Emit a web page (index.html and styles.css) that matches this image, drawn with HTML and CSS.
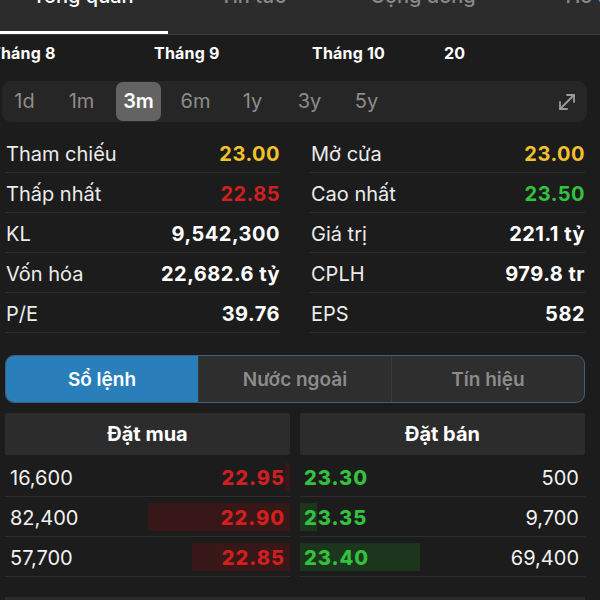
FILE: index.html
```html
<!DOCTYPE html>
<html lang="vi">
<head>
    <meta charset="UTF-8">
    <meta name="viewport" content="width=device-width, initial-scale=1.0">
    <title>Tổng quan</title>
    <link rel="stylesheet" href="styles.css">
</head>
<body>
    <nav class="tabs">
        <div class="tab active">Tổng quan</div>
        <div class="tab">Tin tức</div>
        <div class="tab">Cộng đồng</div>
        <div class="tab">Hồ sơ</div>
    </nav>

    <div class="axis">
        <span class="tick" style="left: -10px">Tháng 8</span>
        <span class="tick" style="left: 154px">Tháng 9</span>
        <span class="tick" style="left: 312px">Tháng 10</span>
        <span class="tick" style="left: 444px">20</span>
    </div>

    <div class="periods">
        <span class="period">1d</span>
        <span class="period">1m</span>
        <span class="period active">3m</span>
        <span class="period">6m</span>
        <span class="period">1y</span>
        <span class="period">3y</span>
        <span class="period">5y</span>
        <svg class="expand" width="22" height="22" viewBox="0 0 22 22" fill="none" stroke="#9a9a9a" stroke-width="1.8" stroke-linecap="round" stroke-linejoin="round">
            <path d="M4 18L18 4"/>
            <path d="M11 4h7v7"/>
            <path d="M4 11v7h7"/>
        </svg>
    </div>

    <div class="stats">
        <div class="stat"><span class="label">Tham chiếu</span><span class="value ref">23.00</span></div>
        <div class="stat"><span class="label">Mở cửa</span><span class="value ref">23.00</span></div>
        <div class="stat"><span class="label">Thấp nhất</span><span class="value down">22.85</span></div>
        <div class="stat"><span class="label">Cao nhất</span><span class="value up">23.50</span></div>
        <div class="stat"><span class="label">KL</span><span class="value">9,542,300</span></div>
        <div class="stat"><span class="label">Giá trị</span><span class="value">221.1 tỷ</span></div>
        <div class="stat"><span class="label">Vốn hóa</span><span class="value">22,682.6 tỷ</span></div>
        <div class="stat"><span class="label">CPLH</span><span class="value">979.8 tr</span></div>
        <div class="stat"><span class="label">P/E</span><span class="value">39.76</span></div>
        <div class="stat"><span class="label">EPS</span><span class="value">582</span></div>
    </div>

    <div class="segment">
        <div class="seg active">Sổ lệnh</div>
        <div class="seg">Nước ngoài</div>
        <div class="seg">Tín hiệu</div>
    </div>

    <div class="book">
        <div class="book-head">Đặt mua</div>
        <div class="book-head">Đặt bán</div>

        <div class="order buy">
            <div class="depth" style="width: 5px"></div>
            <span class="qty">16,600</span><span class="price down">22.95</span>
        </div>
        <div class="order sell">
            <span class="price up">23.30</span><span class="qty">500</span>
        </div>

        <div class="order buy">
            <div class="depth" style="width: 142px"></div>
            <span class="qty">82,400</span><span class="price down">22.90</span>
        </div>
        <div class="order sell">
            <div class="depth" style="width: 17px"></div>
            <span class="price up">23.35</span><span class="qty">9,700</span>
        </div>

        <div class="order buy">
            <div class="depth" style="width: 98px"></div>
            <span class="qty">57,700</span><span class="price down">22.85</span>
        </div>
        <div class="order sell">
            <div class="depth" style="width: 120px"></div>
            <span class="price up">23.40</span><span class="qty">69,400</span>
        </div>
    </div>

    <div class="more"></div>
</body>
</html>
```

FILE: styles.css
```css
body {
    margin: 0;
    background-color: #1c1c1c;
    color: #ececec;
    font-family: Inter, "Noto Sans", sans-serif;
    overflow: hidden;
}

/* top tabs, scrolled partly out of view */
.tabs {
    display: flex;
    height: 50px;
    margin-top: -16px;
    margin-left: -2px;
    background-color: #2c2c2c;
    border-bottom: 1px solid #383838;
}
.tab {
    flex: none;
    width: 170px;
    box-sizing: border-box;
    text-align: center;
    font-size: 20px;
    font-weight: 500;
    line-height: 24px;
    color: #8a8a8a;
}
.tab.active {
    color: #ffffff;
    border-bottom: 3px solid #ffffff;
}

/* chart month axis */
.axis {
    position: relative;
    height: 35px;
}
.tick {
    position: absolute;
    top: 8px;
    font-size: 16px;
    font-weight: 700;
    letter-spacing: 0.2px;
    color: #ffffff;
}

/* period selector */
.periods {
    display: flex;
    align-items: center;
    gap: 12px;
    height: 41px;
    margin: 11px 13px 0 2px;
    padding: 1px 0;
    box-sizing: border-box;
    background-color: #262626;
    border-radius: 9px;
}
.period {
    width: 45px;
    height: 39px;
    line-height: 39px;
    text-align: center;
    font-size: 20px;
    color: #8c8c8c;
    border-radius: 7px;
}
.period.active {
    background-color: #636363;
    color: #ffffff;
    font-weight: 600;
}
.expand {
    margin-left: auto;
    margin-right: 9px;
}

/* stats table */
.stats {
    display: grid;
    grid-template-columns: 1fr 1fr;
    column-gap: 30px;
    margin-top: 11px;
    padding: 0 15px 0 5px;
}
.stat {
    display: flex;
    justify-content: space-between;
    align-items: center;
    height: 40px;
    padding-top: 3px;
    border-bottom: 1px solid #2f2f2f;
    box-sizing: border-box;
    font-size: 20px;
}
.label {
    padding-left: 1px;
    color: #ececec;
}
.value {
    font-weight: 700;
    letter-spacing: 0.5px;
    color: #ffffff;
}
.ref {
    color: #f2c12e;
}
.down {
    color: #d01f1f;
}
.up {
    color: #33c23d;
}

/* segmented control */
.segment {
    display: flex;
    height: 48px;
    margin: 22px 15px 0 5px;
    box-sizing: border-box;
    border: 1px solid #3f5f7c;
    border-radius: 9px;
    background-color: #2e2e2e;
    overflow: hidden;
}
.seg {
    flex: 1;
    display: flex;
    align-items: center;
    justify-content: center;
    font-size: 19px;
    font-weight: 600;
    color: #8c8c8c;
}
.seg + .seg {
    border-left: 1px solid #3a3a3a;
}
.seg.active {
    background-color: #2a7fba;
    color: #ffffff;
}

/* order book */
.book {
    display: grid;
    grid-template-columns: 1fr 1fr;
    column-gap: 10px;
    margin-top: 10px;
    padding: 0 15px 0 5px;
}
.book-head {
    height: 42px;
    margin-bottom: 2px;
    display: flex;
    align-items: center;
    justify-content: center;
    background-color: #2c2c2c;
    border-radius: 2px;
    font-size: 20px;
    font-weight: 700;
    color: #ffffff;
}
.order {
    position: relative;
    display: flex;
    justify-content: space-between;
    align-items: center;
    height: 40px;
    padding-top: 3px;
    border-bottom: 1px solid #2e2e2e;
    box-sizing: border-box;
    font-size: 20px;
}
.order span {
    position: relative;
}
.depth {
    position: absolute;
    top: 6px;
    bottom: 5px;
}
.buy .depth {
    right: 0;
    background-color: #381718;
}
.sell .depth {
    left: 0;
    background-color: #1b361d;
}
.buy {
    padding-left: 5px;
    padding-right: 5px;
}
.sell {
    padding-left: 4px;
    padding-right: 6px;
}
.qty {
    color: #f2f2f2;
}
.price {
    font-weight: 800;
    letter-spacing: 1px;
}

.more {
    height: 20px;
    margin: 20px 15px 0 5px;
    background-color: #2a2a2a;
}
```
